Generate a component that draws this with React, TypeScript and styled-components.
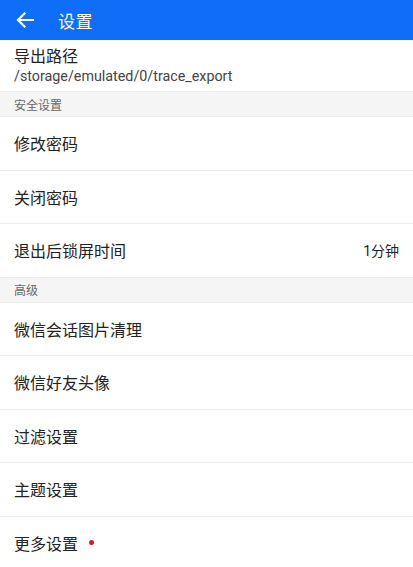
import styled, { createGlobalStyle } from "styled-components";

const GlobalStyle = createGlobalStyle`
    html, body {
        margin: 0;
        padding: 0;
        background-color: #fff;
        font-family: Roboto, "Noto Sans CJK SC", sans-serif;
    }
`;

const Page = styled.div`
    width: 413px;
    height: 567px;
    overflow: hidden;
    display: flex;
    flex-direction: column;
    background-color: #fff;

    & > * {
        flex-shrink: 0;
    }
`;

const Toolbar = styled.header`
    height: 40px;
    display: flex;
    align-items: center;
    background-color: #0f6ef7;
    color: #fff;
`;

const BackButton = styled.div`
    width: 58px;
    height: 40px;
    display: flex;
    align-items: center;
    padding-left: 16px;
    box-sizing: border-box;
`;

const Title = styled.h1`
    margin: 0;
    font-size: 17px;
    font-weight: normal;
    letter-spacing: 0.5px;
`;

const PathItem = styled.div`
    height: 51px;
    display: flex;
    flex-direction: column;
    justify-content: center;
    padding: 0 14px;
    border-bottom: 1px solid #ececec;
`;

const PathTitle = styled.div`
    font-size: 16px;
    color: #222;
    line-height: 21px;
`;

const PathValue = styled.div`
    font-size: 14.3px;
    color: #444;
    line-height: 19px;
`;

const SectionHeader = styled.div`
    height: 24px;
    display: flex;
    align-items: center;
    padding: 0 14px;
    background-color: #f5f5f5;
    border-bottom: 1px solid #ececec;
    font-size: 12px;
    color: #666;
`;

const Row = styled.div<{ $last?: boolean }>`
    height: 52.5px;
    display: flex;
    align-items: center;
    justify-content: space-between;
    padding: 0 14px;
    border-bottom: ${(p) => (p.$last ? "none" : "1px solid #ececec")};
    font-size: 16px;
    color: #222;
`;

const Label = styled.span`
    display: flex;
    align-items: center;
`;

const Dot = styled.span`
    width: 5px;
    height: 5px;
    border-radius: 50%;
    background-color: #e8131b;
    margin-left: 11px;
`;

const Value = styled.span`
    font-size: 14px;
    color: #222;
`;

const ArrowLeft = () => (
    <svg width="18" height="16" viewBox="0 0 18 16" fill="none">
        <path d="M17 8H2M8.5 1.5L2 8l6.5 6.5" stroke="#fff" strokeWidth="2.2" strokeLinecap="square" />
    </svg>
);

const App = () => {
    return (
        <Page>
            <GlobalStyle />
            <Toolbar>
                <BackButton>
                    <ArrowLeft />
                </BackButton>
                <Title>设置</Title>
            </Toolbar>
            <PathItem>
                <PathTitle>导出路径</PathTitle>
                <PathValue>/storage/emulated/0/trace_export</PathValue>
            </PathItem>
            <SectionHeader>安全设置</SectionHeader>
            <Row>修改密码</Row>
            <Row>关闭密码</Row>
            <Row>
                <Label>退出后锁屏时间</Label>
                <Value>1分钟</Value>
            </Row>
            <SectionHeader>高级</SectionHeader>
            <Row>微信会话图片清理</Row>
            <Row>微信好友头像</Row>
            <Row>过滤设置</Row>
            <Row>主题设置</Row>
            <Row $last>
                <Label>
                    更多设置
                    <Dot />
                </Label>
            </Row>
        </Page>
    );
};

export default App;
